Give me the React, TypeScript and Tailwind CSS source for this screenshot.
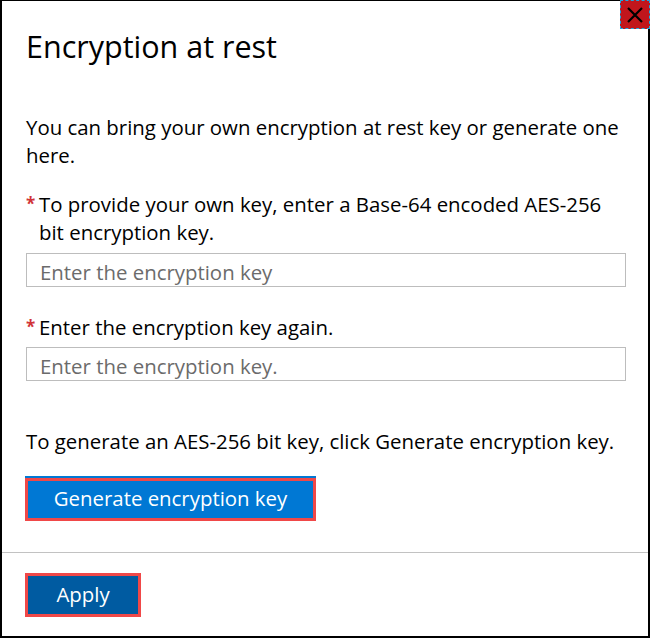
import React from "react";

const CloseIcon = () => (
  <svg width="18" height="18" viewBox="0 0 18 18" fill="none">
    <path d="M2 2 L16 16 M16 2 L2 16" stroke="#000" strokeWidth="2.2" />
  </svg>
);

const Required = () => (
  <span className="w-[13px] shrink-0 text-[#d13438] text-[17px] font-bold leading-[28px]">*</span>
);

const App = () => {
  return (
    <div className="relative w-[650px] h-[638px] bg-white border-t border-l-2 border-r-2 border-b-2 border-black flex flex-col font-['Open_Sans',sans-serif] text-black">
      <button className="absolute top-[-1px] right-[-2px] w-[30px] h-[29px] bg-[#c1161c] border border-dashed border-[#1ea7e1] flex items-center justify-center">
        <CloseIcon />
      </button>

      <div className="pl-[24px] pr-[22px] pt-[25px] flex flex-col">
        <h1 className="text-[30.5px] leading-[40px] font-medium">Encryption at rest</h1>

        <p className="mt-[47px] text-[20.4px] leading-[28px]">
          <span className="whitespace-nowrap">You can bring your own encryption at rest key or generate one</span>
          <br />
          here.
        </p>

        <div className="mt-[21px] flex text-[20.4px] leading-[28px]">
          <Required />
          <span>
            <span className="whitespace-nowrap">To provide your own key, enter a Base-64 encoded AES-256</span>
            <br />
            bit encryption key.
          </span>
        </div>
        <input
          className="mt-[7px] h-[34px] border border-[#bdbdbd] pl-[13px] pt-[3px] text-[20.4px] placeholder:text-[#6b6b6b] outline-none"
          placeholder="Enter the encryption key"
        />

        <div className="mt-[26px] flex text-[20.4px] leading-[28px]">
          <Required />
          <span>Enter the encryption key again.</span>
        </div>
        <input
          className="mt-[6px] h-[34px] border border-[#bdbdbd] pl-[13px] pt-[3px] text-[20.4px] placeholder:text-[#6b6b6b] outline-none"
          placeholder="Enter the encryption key."
        />

        <p className="mt-[46px] text-[20.4px] leading-[28px] whitespace-nowrap">
          To generate an AES-256 bit key, click Generate encryption key.
        </p>

        <button className="mt-[23px] ml-[-1px] w-[291px] h-[43px] pb-[3px] bg-[#0078d4] border-[3px] border-[#f04848] shadow-[0_-2px_0_#0078d4] text-white text-[20.4px] leading-[28px]">
          Generate encryption key
        </button>
      </div>

      <div className="mt-[31px] border-t border-[#c2c2c2] pl-[23px] pt-[20px]">
        <button className="w-[116px] h-[44px] pb-[2px] bg-[#005ba1] border-[3px] border-[#f04848] text-white text-[20.4px] leading-[28px]">
          Apply
        </button>
      </div>
    </div>
  );
};

export default App;
